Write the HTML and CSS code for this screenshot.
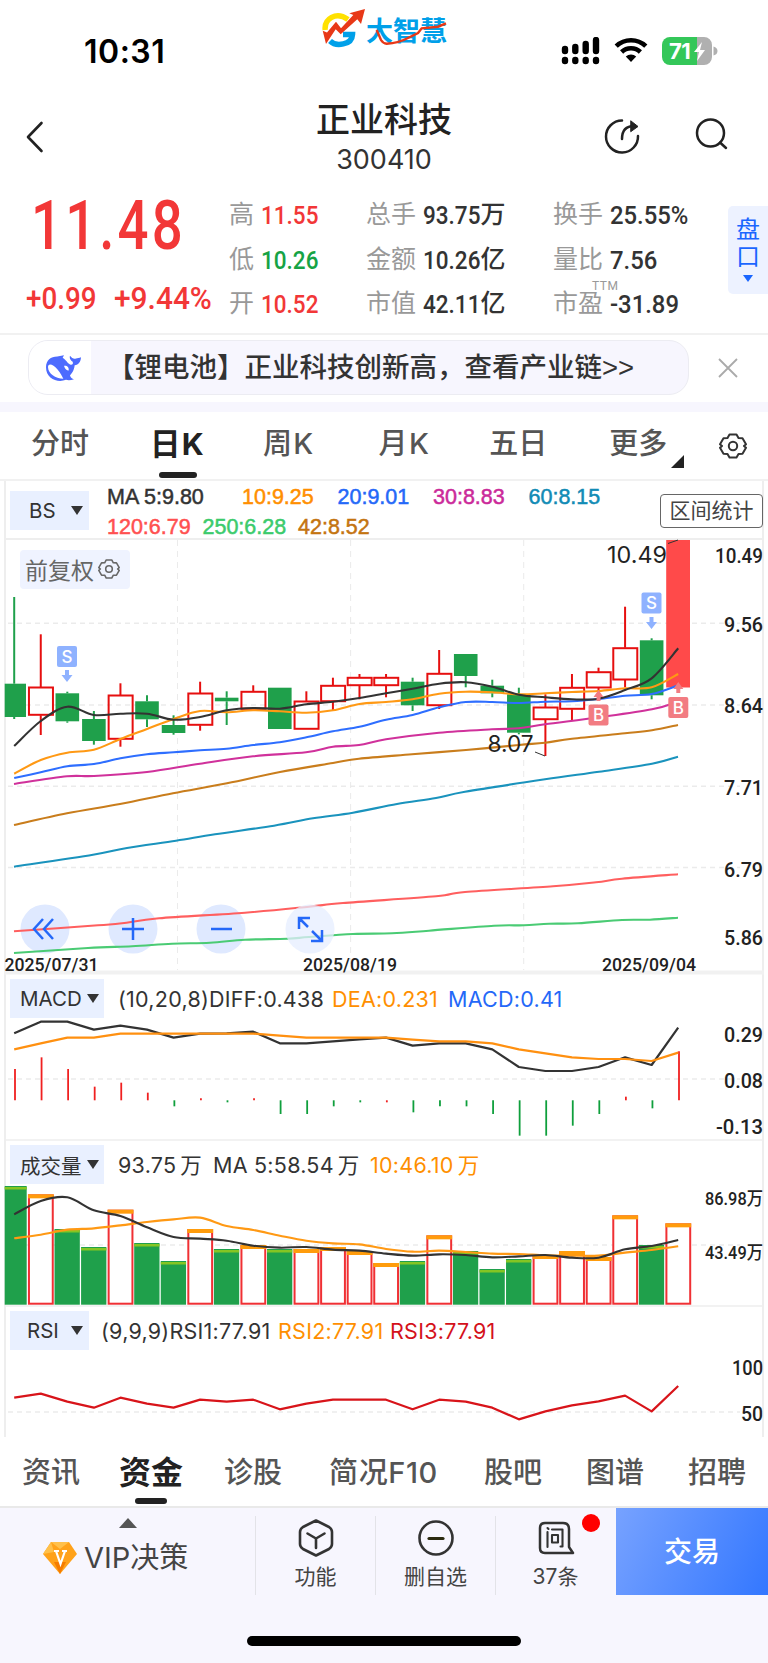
FILE: index.html
```
<!DOCTYPE html>
<html lang="zh-CN">
<head>
	<meta charset="UTF-8">
	<title>正业科技 300410</title>
	<link rel="stylesheet" href="styles.css">
</head>
<body>
	<div class="status">
		<span class="time">10:31</span>
		<div class="brand">
			<svg width="44" height="42" viewBox="0 0 44 42">
				<path d="M3.200 23C2 12 14 4 26 12.500" fill="none" stroke="#ffe100" stroke-width="5.500"/>
				<path d="M8 34C14 40 30 38 30.500 27.500H21" fill="none" stroke="#00a0e9" stroke-width="5.500"/>
				<path d="M.7 23.700L5 25.500 14 14.700l5 6.600L31.300 8l-4-1.700L43 2l-4 15-3.700-4.700-16.600 15-5-5L4 37z" fill="#e83817"/>
			</svg>
			<span>大智慧</span>
			<svg class="swoosh" width="78" height="30" viewBox="0 0 78 30"><path d="M4.700 12L9 22Q11 25.500 14.700 25.700Q26 25.500 38 19L46 15L49.700 10.300L66 8.700L74 5.300" fill="none" stroke="#e83817" stroke-width="2.400"/></svg>
		</div>
		<div class="indicators">
			<svg width="40" height="28" viewBox="0 0 40 28">
				<path d="M4 12v2M14.300 10v4M24.700 7v7M35 3v11M4 23v1M14.300 23v1M24.700 23v1M35 23v1" stroke="#000" stroke-width="6.400" stroke-linecap="round"/>
			</svg>
			<svg width="34" height="26" viewBox="0 0 34 26">
				<path d="M2.200 9.200a21.500 21.500 0 0 1 29.600 0M7.600 15a13.600 13.600 0 0 1 18.800 0" fill="none" stroke="#000" stroke-width="4.600"/>
				<path d="M17 25l-5.200-5.400a7.600 7.600 0 0 1 10.400 0z"/>
			</svg>
			<svg width="56" height="28" viewBox="0 0 56 28">
				<path d="M8 0H35V28H8a8 8 0 0 1-8-8V8a8 8 0 0 1 8-8z" fill="#34c759"/>
				<path d="M35 0h7a8 8 0 0 1 8 8v12a8 8 0 0 1-8 8h-7zM51.500 9.500q4 1 4 4.500t-4 4.500z" fill="#b0b0b0"/>
				<text x="7" y="22" class="battery-level">71</text>
				<path d="M40 5l-8 10h5l-2 9 8-11h-5z" fill="#fff"/>
			</svg>
		</div>
	</div>

	<header>
		<svg class="back" width="18" height="32" viewBox="0 0 18 32"><path d="M15.500 2L2 16l13.500 14" fill="none" stroke="#222" stroke-width="2.600" stroke-linecap="round" stroke-linejoin="round"/></svg>
		<div class="title">
			<h1>正业科技</h1>
			<p>300410</p>
		</div>
		<div class="actions">
			<svg width="38" height="38" viewBox="0 0 38 38" fill="none" stroke="#222" stroke-width="2.500" stroke-linecap="round" stroke-linejoin="round">
				<path d="M19 3.500A16 16 0 1 0 35 19"/><path d="M19 22c0-8 4-13 12-13"/><path d="M28 4l7 5.500-7 5z" fill="#222" stroke-width="1"/>
			</svg>
			<svg width="34" height="34" viewBox="0 0 34 34" fill="none" stroke="#222" stroke-width="2.500" stroke-linecap="round"><circle cx="15.500" cy="16" r="13.500"/><path d="M25 25.500l6 5.500"/></svg>
		</div>
	</header>

	<section class="quote">
		<div class="price red">
			<strong>11.48</strong>
			<div class="change"><span>+0.99</span><span>+9.44%</span></div>
		</div>
		<dl class="stats">
			<div><dt>高</dt><dd class="red"><i>11.55</i></dd></div>
			<div><dt>总手</dt><dd><i>93.75</i>万</dd></div>
			<div><dt>换手</dt><dd><i>25.55%</i></dd></div>
			<div><dt>低</dt><dd class="green"><i>10.26</i></dd></div>
			<div><dt>金额</dt><dd><i>10.26</i>亿</dd></div>
			<div><dt>量比</dt><dd><i>7.56</i></dd></div>
			<div><dt>开</dt><dd class="red"><i>10.52</i></dd></div>
			<div><dt>市值</dt><dd><i>42.11</i>亿</dd></div>
			<div><dt>市盈<sup>TTM</sup></dt><dd><i>-31.89</i></dd></div>
		</dl>
		<div class="handicap"><span>盘</span><span>口</span><svg width="10" height="7"><path d="M0 0h10L5 7z" fill="#1a66ff"/></svg></div>
	</section>

	<section class="banner">
		<div class="pill">
			<div class="whale">
				<svg width="35" height="27" viewBox="78 76 105 80">
					<path d="M78 112C78 92 92 80 112 80L132 76L128 84C140 92 142 100 150 104C158 106 160 102 158 96C150 90 148 84 150 78C156 86 162 88 168 86C172 84 178 84 183 82C182 96 176 104 164 106C162 122 156 130 150 136C152 144 156 146 162 148C152 152 144 152 138 150C112 160 78 146 78 112z" fill="#4d6bfe"/>
					<path d="M84 112C84 98 100 104 112 118C122 130 126 138 130 147C106 145 85 132 84 112zM132 108C140 106 148 112 146 122C140 124 134 116 132 108z" fill="#fff"/>
				</svg>
			</div>
			<span>【锂电池】正业科技创新高，查看产业链<em>&gt;&gt;</em></span>
		</div>
		<svg class="close" width="20" height="20" viewBox="0 0 20 20"><path d="M1 1l18 18M19 1L1 19" stroke="#aaa" stroke-width="1.800"/></svg>
	</section>

	<nav class="periods">
		<a>分时</a>
		<a class="active">日K</a>
		<a>周K</a>
		<a>月K</a>
		<a>五日</a>
		<a class="more">更多</a>
		<svg class="gear" width="28" height="28" viewBox="0 0 28 28"><use href="#gear"/></svg>
	</nav>

	<main>
		<div class="head head-main">
			<button class="chip">BS<i class="caret"></i></button>
			<div class="ma">
				<span class="dark">MA 5:9.80</span><span class="orange">10:9.25</span><span class="blue">20:9.01</span><span class="magenta">30:8.83</span><span class="teal">60:8.15</span>
				<span class="coral">120:6.79</span><span class="mint">250:6.28</span><span class="brown">42:8.52</span>
			</div>
			<button class="range">区间统计</button>
		</div>
		<div class="plot">
			<svg id="price" width="768" height="433" viewBox="0 540 768 433"></svg>
			<div class="adjust">前复权<svg width="22" height="22" viewBox="0 0 28 28"><use href="#gear"/></svg></div>
		</div>

		<div class="head head-macd">
			<button class="chip wide">MACD<i class="caret"></i></button>
			<div class="legend"><span class="w1">(10,20,8)DIFF:0.438</span><span class="w2 orange">DEA:0.231</span><span class="blue">MACD:0.41</span></div>
		</div>
		<svg id="macd" width="768" height="122" viewBox="0 1019 768 122"></svg>

		<div class="head head-vol">
			<button class="chip wide">成交量<i class="caret"></i></button>
			<div class="legend"><span class="w3">93.75<em>万</em></span><span class="w4">MA 5:58.54<em>万</em></span><span class="orange">10:46.10<em>万</em></span></div>
		</div>
		<svg id="volume" width="768" height="121" viewBox="0 1186 768 121"></svg>

		<div class="head head-rsi">
			<button class="chip">RSI<i class="caret"></i></button>
			<div class="legend"><span class="w5">(9,9,9)RSI1:77.91</span><span class="w6 orange">RSI2:77.91</span><span class="crimson">RSI3:77.91</span></div>
		</div>
		<svg id="rsi" width="768" height="85" viewBox="0 1352 768 85"></svg>
	</main>

	<nav class="sections">
		<a>资讯</a>
		<a class="active">资金</a>
		<a>诊股</a>
		<a>简况F10</a>
		<a>股吧</a>
		<a>图谱</a>
		<a>招聘</a>
	</nav>

	<footer>
		<div class="toolbar">
			<div class="vip">
				<svg class="up" width="18" height="10"><path d="M9 0l9 10H0z" fill="#555"/></svg>
				<div>
					<svg width="34" height="32" viewBox="0 0 34 32">
						<path d="M8 0h18l8 12-17 20L0 12z" fill="#ffa21a"/><path d="M8 0h18l-9 7zM0 12L8 0l3 10z" fill="#ffc04a"/><path d="M17 32l6-12h-12z" fill="#f57c00"/>
						<path d="M11 9h5M19 9h5M13 9l4.500 13L22 9" fill="none" stroke="#fff" stroke-width="2.200"/>
					</svg>
					<span>VIP决策</span>
				</div>
			</div>
			<div class="tool">
				<svg width="36" height="38" viewBox="0 0 36 38" fill="none" stroke="#333" stroke-width="2.600" stroke-linejoin="round" stroke-linecap="round"><path d="M18 1.500L31 8Q34 10 34 13V25Q34 28 31 30L18 36.500L5 30Q2 28 2 25V13Q2 10 5 8z"/><path d="M9.500 14.500l8.500 5 8.500-5M18 19.500v9.500"/></svg>
				<span>功能</span>
			</div>
			<div class="tool">
				<svg width="38" height="38" viewBox="0 0 38 38" fill="none" stroke="#333" stroke-width="2.600"><circle cx="19" cy="19" r="16.500"/><path d="M12 19.500h14" stroke="#2b2a10" stroke-width="3.200" stroke-linecap="round"/></svg>
				<span>删自选</span>
			</div>
			<div class="tool">
				<svg width="38" height="38" viewBox="0 0 38 38" fill="none" stroke="#333" stroke-width="2.500" stroke-linejoin="round" stroke-linecap="round"><path d="M8 4H26Q32 4 32 10V28L36 34H8Q3 34 3 29V9Q3 4 8 4z"/><path d="M10.500 13v15M10.500 9l1 1M15 10.500h10.500v17h-2M15 16h6v7.500h-6z" stroke-width="2.100"/></svg>
				<span>37条</span>
				<b class="dot"></b>
			</div>
			<div class="trade">交易</div>
		</div>
		<div class="home"></div>
	</footer>

	<svg class="defs">
		<symbol id="gear" viewBox="0 0 28 28"><path d="M10.500 2.500h7l2 3.600 4 .1 3.500 6-2 1.800 2 1.800-3.500 6-4 .1-2 3.600h-7l-2-3.600-4-.1-3.500-6L3 14l-2-1.800 3.500-6 4-.1z" fill="none" stroke="currentColor" stroke-width="2" stroke-linejoin="round"/><circle cx="14" cy="14" r="4.200" fill="none" stroke="currentColor" stroke-width="2"/></symbol>
	</svg>
	<script src="chart.js"></script>
</body>
</html>
```

FILE: styles.css
```
html,body {
	margin:0;
	padding:0;
	background:#fff;
}

body {
	width:768px;
	height:1663px;
	overflow:hidden;
	font-family:Inter,"Noto Sans CJK SC",sans-serif;
	color:#222;
}

h1,p,dl,dd { margin:0; }

svg { display:block; flex:none; }

i,em { font-style:normal; }

button {
	border:0;
	padding:0;
	background:none;
	font:inherit;
	color:inherit;
}

.defs {
	position:absolute;
	width:0;
	height:0;
}

.dark { color:#333; }
.red { color:#f23737; }
.green { color:#16a345; }
.orange { color:#ff8f00; }
.blue { color:#2468f8; }
.magenta { color:#cb2a9a; }
.teal { color:#118bb5; }
.coral { color:#ff5050; }
.mint { color:#3ccb6c; }
.brown { color:#c47410; }
.crimson { color:#d4111b; }

/* status bar */
.status {
	display:grid;
	grid-template-columns:322px 1fr 207px;
	height:90px;
}

.time {
	padding:32px 0 0 84px;
	font-size:32px;
	line-height:39px;
	font-weight:600;
	letter-spacing:.5px;
	color:#000;
}

.brand {
	position:relative;
	display:flex;
	padding-top:7px;
}

.brand span {
	margin-top:6px;
	font-size:27px;
	line-height:38px;
	font-weight:700;
	color:#00a0e9;
}

.swoosh {
	position:absolute;
	left:50px;
	top:18px;
}

.indicators {
	display:flex;
	align-items:flex-start;
	gap:14px;
	padding-top:37px;
}

.indicators svg:first-child { margin-right:-1px; }

.battery-level {
	font:700 22px Inter,sans-serif;
	letter-spacing:-.5px;
	fill:#fff;
}

/* title */
header {
	display:grid;
	grid-template-columns:250px 268px 1fr;
	height:100px;
}

.back { margin:31px 0 0 26px; }

.title { text-align:center; }

.title h1 {
	margin-top:5px;
	font-size:34px;
	line-height:50px;
	font-weight:500;
}

.title p {
	font-size:27px;
	line-height:30px;
	color:#333;
}

.actions {
	display:flex;
	align-items:flex-start;
	gap:54px;
	padding:27px 0 0 85px;
}

/* quote */
.quote {
	display:flex;
	height:143px;
	border-bottom:2px solid #f1f1f1;
	font-family:Roboto,"Noto Sans CJK SC",sans-serif;
}

.price {
	width:229px;
	font-weight:500;
}

.price strong {
	display:block;
	margin:6px 0 0 31px;
	font-size:69px;
	line-height:60px;
	font-weight:500;
	letter-spacing:4px;
	transform:scaleX(.79);
	transform-origin:left;
}

.change {
	display:flex;
	margin:23px 0 0 26px;
	font-size:30.500px;
	line-height:40px;
}

.change span {
	transform:scaleX(.91);
	transform-origin:left;
}

.change span:first-child { width:88px; }
.change span:last-child { transform:scaleX(.98); }

.stats {
	display:grid;
	grid-template-columns:137px 187px 150px;
	grid-auto-rows:44.500px;
	padding-top:3px;
	width:499px;
}

.stats div {
	display:flex;
	line-height:44px;
	font-size:25px;
}

.stats dt {
	position:relative;
	width:32px;
	color:#999;
}

.stats div:nth-child(3n+2) dt,
.stats div:nth-child(3n) dt { width:57px; }

.stats dd {
	display:flex;
	font-weight:500;
}

.stats dd:not(.red):not(.green) { color:#333; }

.stats i {
	display:block;
	margin-right:-10px;
	font-size:26.500px;
	transform:scaleX(.85);
	transform-origin:left;
}

.stats div:nth-child(3n) i { transform:scaleX(.9); }

.stats sup {
	position:absolute;
	left:39px;
	top:-2px;
	font-size:12px;
	line-height:12px;
	letter-spacing:.5px;
}

.handicap {
	display:flex;
	flex-direction:column;
	align-items:center;
	margin-top:16px;
	padding-top:11px;
	box-sizing:border-box;
	width:40px;
	height:88px;
	border-radius:5px 0 0 5px;
	background:#edf2ff;
	color:#1a66ff;
	font-size:24px;
	line-height:27px;
}

.handicap svg { margin-top:4px; }

/* banner */
.banner {
	display:flex;
	align-items:center;
	box-sizing:border-box;
	height:77px;
	padding-bottom:2px;
	border-bottom:10px solid #f7f6fe;
}

.pill {
	display:flex;
	box-sizing:border-box;
	width:661px;
	height:55px;
	margin-left:28px;
	border:1px solid #ececf2;
	border-radius:20px;
	background:#f7f6fe;
	overflow:hidden;
	font-size:27.500px;
	line-height:52px;
	font-weight:500;
	color:#333;
	white-space:nowrap;
}

.pill span { margin-left:16px; }
.pill em { font-family:"Liberation Sans",sans-serif; }

.whale {
	width:62px;
	padding:14px 0 0 17px;
	box-sizing:border-box;
	background:#fff;
}

.close { margin-left:29px; }

/* period tabs */
.periods {
	display:flex;
	height:67px;
	border-bottom:2px solid #f1f1f1;
	line-height:64px;
	font-size:29px;
	font-weight:500;
	color:#555;
}

.periods a { margin-left:31px; white-space:nowrap; }
.periods a:nth-child(2) { margin-left:61px; font-size:30.500px; }
.periods a:nth-child(3) { margin-left:58px; }
.periods a:nth-child(4) { margin-left:64px; }
.periods a:nth-child(5) { margin-left:59px; }
.periods a:nth-child(6) { margin-left:62px; }

.periods a:nth-child(2),
.periods a:nth-child(3),
.periods a:nth-child(4) { letter-spacing:1.300px; }

.periods .active,
.sections .active {
	position:relative;
	font-weight:700;
	color:#222;
}

.periods .active::after,
.sections .active::after {
	content:"";
	position:absolute;
	left:50%;
	bottom:1px;
	width:38px;
	height:6px;
	margin-left:-19px;
	border-radius:3px;
	background:#222;
}

.more { position:relative; }

.more::after {
	content:"";
	position:absolute;
	right:-17px;
	top:43px;
	border:solid transparent;
	border-width:0 0 13px 13px;
	border-bottom-color:#222;
}

.gear { margin:20px 0 0 auto; padding-right:21px; color:#333; }

/* charts */
main {
	background:
		linear-gradient(#eee,#eee) 4px 0/2px 100% no-repeat,
		linear-gradient(#eee,#eee) 762px 0/2px 100% no-repeat;
}

.head {
	display:flex;
	align-items:flex-start;
	box-sizing:border-box;
	padding-left:10px;
}

.head-main {
	height:59px;
	padding-top:10px;
	background:linear-gradient(#eee,#eee) 4px 57px/760px 2px no-repeat;
}

.head-macd { height:46px; padding-top:6px; }
.head-vol { height:45px; padding-top:4px; }
.head-rsi { height:45px; padding-top:4px; }

.chip {
	display:flex;
	align-items:center;
	justify-content:space-between;
	box-sizing:border-box;
	width:79px;
	height:39px;
	padding:0 6px 0 19px;
	background:#e9f0ff;
	font-size:20.500px;
	color:#333;
}

.head-rsi .chip { padding-left:17px; }
.chip.wide { width:94px; padding:0 5px 0 10px; }

.caret {
	border:solid transparent;
	border-width:9px 6px 0;
	border-top-color:#333;
}

.ma {
	display:flex;
	flex-wrap:wrap;
	width:553px;
	margin:-8px 0 0 18px;
	font-family:"Liberation Sans",sans-serif;
	font-size:21.500px;
	line-height:29.500px;
	-webkit-text-stroke:.5px;
}

.ma span { width:95.500px; white-space:nowrap; }
.ma span:first-child { width:135px; }
.ma span:nth-child(5) { width:120px; }

.range {
	width:103px;
	height:34px;
	margin-top:3px;
	border:1.500px solid #666;
	border-radius:4px;
	font-size:21px;
	line-height:30px;
	color:#444;
}

.plot { position:relative; }

.adjust {
	position:absolute;
	left:20px;
	top:10px;
	display:flex;
	align-items:center;
	gap:4px;
	box-sizing:border-box;
	width:110px;
	height:39px;
	padding:0 0 2px 5px;
	border-radius:4px;
	background:#eff3ff;
	font-size:23px;
	color:#666;
}

.legend {
	display:flex;
	padding-left:14px;
	font-size:21.500px;
	line-height:41px;
	letter-spacing:.25px;
	color:#333;
	white-space:nowrap;
}

.head-rsi .legend { padding-left:12px; }

.legend em { margin-left:4px; }

.w1 { width:214px; }
.w2 { width:116px; }
.w3 { width:95px; }
.w4 { width:157px; }
.w5 { width:177px; }
.w6 { width:112px; }

main svg { overflow:visible; }

main svg text {
	font-family:Roboto,"Noto Sans CJK SC",sans-serif;
	font-weight:500;
	font-size:20px;
	fill:#222;
}

main svg text.mark { font:400 22.500px Inter,sans-serif; }
main svg text.tag { font:500 17px Inter,sans-serif; fill:#fff; }

/* section tabs */
.sections {
	display:flex;
	height:69px;
	border-bottom:2px solid #e9e9e9;
	line-height:72px;
	font-size:29px;
	font-weight:500;
	color:#555;
	white-space:nowrap;
}

.sections a { margin-left:44px; }
.sections a:first-child { margin-left:22px; }
.sections a:nth-child(2) { margin-left:39px; font-size:32px; }
.sections a:nth-child(3) { margin-left:41px; }
.sections a:nth-child(4) { margin-left:47px; letter-spacing:.6px; }
.sections a:nth-child(5) { margin-left:46px; }

.sections .active::after {
	bottom:2px;
	width:32px;
	margin-left:-16px;
}

/* toolbar */
footer {
	height:155px;
	background:#f7f6fe;
}

.toolbar {
	display:flex;
	height:87px;
}

.vip {
	width:255px;
	font-size:29px;
	color:#444;
}

.vip div {
	display:flex;
	align-items:center;
	gap:7px;
	margin:12px 0 0 43px;
	line-height:36px;
}

.up { margin:10px 0 0 119px; }

.tool {
	position:relative;
	display:flex;
	flex-direction:column;
	align-items:center;
	width:120px;
	margin-top:8px;
	box-sizing:border-box;
	border-left:1px solid #e3e3e8;
	padding-top:3px;
	font-size:21px;
	line-height:40px;
	color:#444;
}

.tool svg { height:38px; }

.dot {
	position:absolute;
	right:15px;
	top:-2px;
	width:18px;
	height:18px;
	border-radius:9px;
	background:#f00;
}

.trade {
	width:152px;
	margin-left:auto;
	background:linear-gradient(115deg,#77a2ff,#3377ff);
	color:#fff;
	font-size:28px;
	line-height:89px;
	font-weight:500;
	text-align:center;
}

.home {
	width:274px;
	height:10px;
	margin:41px auto 0;
	border-radius:5px;
	background:#000;
}
```

FILE: chart.js
```
var X0 = 14.2, STEP = 26.56;
var RED = '#e60f0f', GREEN = '#1fa04b';

function x(i) { return X0 + i * STEP; }

function el(parent, name, attrs, text) {
	var node = document.createElementNS('http://www.w3.org/2000/svg', name);
	for (var key in attrs) node.setAttribute(key, attrs[key]);
	if (text) node.textContent = text;
	parent.appendChild(node);
	return node;
}

function rect(svg, l, t, w, h, fill, stroke) {
	el(svg, 'rect', {x: l, y: t, width: w, height: h, fill: fill, stroke: stroke || 'none', 'stroke-width': 2});
}

function line(svg, x1, y1, x2, y2, color, width, dash) {
	el(svg, 'line', {x1: x1, y1: y1, x2: x2, y2: y2, stroke: color, 'stroke-width': width || 1, 'stroke-dasharray': dash || 'none'});
}

// straight polyline or catmull-rom curve through the points
function path(svg, pts, color, smooth, width) {
	var d = 'M' + pts[0].join(' ');
	for (var i = 1; i < pts.length; i++) {
		var a = pts[i - 1], b = pts[i], prev = pts[i - 2] || a, next = pts[i + 1] || b;
		d += smooth
			? 'C' + [a[0] + (b[0] - prev[0]) / 6, a[1] + (b[1] - prev[1]) / 6, b[0] - (next[0] - a[0]) / 6, b[1] - (next[1] - a[1]) / 6, b[0], b[1]].join(' ')
			: 'L' + b.join(' ');
	}
	el(svg, 'path', {d: d, fill: 'none', stroke: color, 'stroke-width': width || 2.2, 'stroke-linejoin': 'round'});
}

function series(ys, base) {
	return ys.map(function (y, i) { return [x(i), base === undefined ? y : base + y / 3]; });
}

function grid(svg, ys) {
	ys.forEach(function (y) { line(svg, 8, y, 740, y, '#ebebeb', 1.5, '5 4'); });
}

// axis label squeezed to end at the right edge
function axis(svg, str, left, y, size) {
	el(svg, 'text', {x: left, y: y, textLength: 763 - left, lengthAdjust: 'spacingAndGlyphs', style: 'font-size:' + (size || 20) + 'px'}, str);
}

/* price */
var price = document.getElementById('price');
grid(price, [623.3, 705, 786.3, 867.5]);
[177.5, 350.6, 523.7].forEach(function (v) { line(price, v, 540, v, 970, '#ebebeb', 1, '6 5'); });
line(price, 4, 972.5, 764, 972.5, '#f1f1f1', 4);
[45, 133, 221].forEach(function (cx) { el(price, 'circle', {cx: cx, cy: 929, r: 24.5, fill: '#dfe9ff'}); });

// up, body top, body bottom, high, low
var candles = [
	[0, 683.7, 717, 597, 719], [1, 687, 715.3, 634.3, 735], [0, 693.3, 721.3, 691.7, 722.7], [0, 719, 741, 711, 744.7],
	[1, 695, 739.3, 683.3, 746.7], [0, 701.3, 719.3, 695.3, 727], [0, 725, 733, 715.3, 734.7], [1, 693, 725.3, 681.7, 730.7],
	[0, 697.7, 701.3, 691.3, 725], [1, 691.3, 709.3, 685.3, 709.3], [0, 687.7, 729, 687.7, 729], [1, 701, 729.3, 691.3, 729.3],
	[1, 685.3, 701.7, 677.7, 711], [1, 677.3, 685.7, 674, 699.3], [1, 677.3, 685.7, 674, 697.3], [0, 681.7, 705.3, 677.7, 711],
	[1, 673.3, 705.7, 650, 709], [0, 654, 676, 654, 687.3], [0, 685.7, 693.3, 679.7, 697.3], [0, 694.3, 732.7, 687.7, 734.3],
	[1, 707, 719.7, 694.3, 756], [1, 687.3, 709.3, 674, 720.7], [1, 671.7, 688, 667.7, 695], [1, 647.7, 680, 606.7, 687.3],
	[0, 640.3, 695.3, 638.3, 699.3]
];
candles.forEach(function (c, i) {
	var color = c[0] ? RED : GREEN, left = Math.max(x(i) - 11.8, 4.7);
	line(price, x(i), c[3], x(i), c[1], color, 2);
	line(price, x(i), c[2], x(i), c[4], color, 2);
	if (c[0]) rect(price, left, c[1] + .5, 24, c[2] - c[1] - 1, 'none', RED);
	else rect(price, left, c[1], x(i) + 11.8 - left, c[2] - c[1], GREEN);
});
rect(price, 666.2, 540, 23.8, 147.5, '#ff4a4a');

var W = 2.1;
path(price, [[14, 953], [88, 948], [132, 946.3], [172, 943.7], [210, 942.7], [245, 939.7], [287, 938.7], [309, 937], [353, 934], [392, 933.3], [429, 930.7], [494, 925.7], [524, 925.3], [549, 923.7], [578, 923.3], [622, 920], [650, 919.7], [678, 917.7]], '#4acb74', true, W);
path(price, [[14, 931.3], [98, 925.3], [122, 923.3], [159, 918.3], [245, 912.7], [309, 906.7], [343, 903], [436, 896.3], [465, 892], [553, 886.3], [596, 882.3], [622, 878.7], [678, 874.3]], '#ff5f5f', true, W);
path(price, [[14, 866.7], [93, 854.7], [127, 848], [176, 840.7], [215, 834.3], [274, 825.7], [313, 818.3], [353, 812.7], [397, 804], [436, 798], [465, 791.7], [545, 779.3], [599, 771.7], [652, 763.7], [678, 756.7]], '#1a93bd', true, W);
path(price, [[14, 825], [67, 813.3], [120, 804], [173, 793.3], [227, 783.3], [280, 772], [333, 763], [359, 758.7], [412, 754.3], [466, 750], [519, 745], [545, 742.7], [572, 738.7], [625, 733.3], [652, 730.3], [678, 725]], '#c97d1c', true, W);
path(price, [[14, 784], [67, 776.3], [94, 776], [147, 772], [200, 763.7], [253, 756.3], [306, 752.3], [333, 746.7], [359, 745], [386, 739.3], [439, 732.7], [492, 729.3], [519, 728.3], [545, 724.3], [599, 717.3], [652, 709.3], [678, 701.7]], '#d0319b', true, W);
path(price, series([778, 772.3, 766.3, 764, 758.3, 754.3, 752.3, 750.3, 748.7, 745, 742.3, 737.3, 731.3, 726.7, 719.7, 715, 707.3, 702, 702, 703, 701.7, 701.3, 699, 695.7, 694, 685.3]), '#2e6eff', true, W);
path(price, series([773.7, 760, 752.7, 749.7, 739, 729, 719, 711, 712.3, 710.3, 711.3, 712.7, 710.3, 704, 702, 699.3, 693.7, 691.7, 692.3, 694.3, 693.3, 692, 691, 688.3, 687.3, 674]), '#ff9914', true, W);
path(price, series([746, 721, 706.7, 715, 713.7, 713.7, 719.7, 717, 710.3, 708, 708.7, 704.3, 701.7, 698, 693.3, 688.7, 683.7, 682.3, 686.7, 694.7, 697.3, 699.3, 698.7, 690, 678.3, 648.3]), '#333', true, W);

// trade markers
function marker(cx, top, letter, color, arrow) {
	el(price, 'rect', {x: cx - 10, y: top, width: 20, height: 21, rx: 2, fill: color});
	el(price, 'text', {x: cx, y: top + 16.5, 'text-anchor': 'middle', 'class': 'tag'}, letter);
	el(price, 'path', {d: arrow, fill: color});
}
marker(67, 646, 'S', '#8fb2ff', 'M65 670h4v5h3.500l-5.500 7-5.500-7h3.500z');
marker(651.5, 592.5, 'S', '#8fb2ff', 'M649.500 617h4v5h3.500l-5.500 7-5.500-7h3.500z');
marker(598.5, 704.5, 'B', '#f27c82', 'M598.500 690l5 7h-3v4h-4v-4h-3z');
marker(678.3, 697, 'B', '#f27c82', 'M678.300 682l5 7h-3v4h-4v-4h-3z');

el(price, 'text', {x: 607, y: 563, textLength: 60, lengthAdjust: 'spacingAndGlyphs', 'class': 'mark'}, '10.49');
el(price, 'text', {x: 487.5, y: 752, textLength: 46, lengthAdjust: 'spacingAndGlyphs', 'class': 'mark'}, '8.07');
line(price, 668, 543.5, 678, 540, '#333', 1);
line(price, 535, 752, 545, 756, '#333', 1);

axis(price, '10.49', 715, 563);
axis(price, '9.56', 724, 632.3);
axis(price, '8.64', 724, 713);
axis(price, '7.71', 724, 795);
axis(price, '6.79', 724, 876.7);
axis(price, '5.86', 724, 945);
[[4.5, '2025/07/31'], [303, '2025/08/19'], [602, '2025/09/04']].forEach(function (d) {
	el(price, 'text', {x: d[0], y: 970.5, textLength: 94, lengthAdjust: 'spacingAndGlyphs', style: 'font-size:18px'}, d[1]);
});

// zoom controls
el(price, 'circle', {cx: 310, cy: 929, r: 24.5, fill: '#e5edff', 'fill-opacity': .75});
el(price, 'path', {
	d: 'M43 919l-9 10 9 10M53 919l-9 10 9 10M133 918v22M122 929h22M211 929h21M310 918h-11v11M299 918l9 9M312 931l10 10M322 930v11h-11',
	fill: 'none', stroke: '#2468f8', 'stroke-width': 2.5
});

/* macd */
var macd = document.getElementById('macd');
grid(macd, [1079]);
line(macd, 4, 1140, 764, 1140, '#eee', 1.5);
[297, 262, 297, 350, 338, 368, -409, 385, -397, 385, -432, -432, -409, -397, 397, -427, -409, -409, -432, -497, -497, -467, -432, 380, -415, 244].forEach(function (v, i) {
	line(macd, x(i) + .8, 1100.3, x(i) + .8, 970 + Math.abs(v) / 3, v > 0 ? '#f02020' : '#0f9f3c', 1.8);
});
path(macd, series([190, 155, 155, 179, 167, 179, 203, 191, 190, 185, 220, 220, 214, 208, 203, 227, 220, 220, 238, 291, 303, 303, 291, 262, 285, 173], 970), '#333');
path(macd, series([238, 220, 203, 203, 191, 191, 191, 191, 191, 191, 197, 203, 203, 203, 203, 209, 214, 214, 220, 238, 250, 262, 267, 267, 273, 248], 970), '#ff9010');
axis(macd, '0.29', 724, 1041.5);
axis(macd, '0.08', 724, 1087.5);
axis(macd, '-0.13', 716, 1133.5);

/* volume, negative = down day */
var volume = document.getElementById('volume');
grid(volume, [1245]);
line(volume, 4, 1306, 764, 1306, '#eee', 1.5);
[-138, 163, -267, -321, 209, -309, -363, 267, -327, 315, -327, 327, 321, 333, 369, -363, 286, -333, -387, -357, 345, 333, 351, 226, -315, 250].forEach(function (v, i) {
	var top = 1140 + Math.abs(v) / 3, left = Math.max(x(i) - 12.8, 4.7), w = x(i) + 12.5 - left;
	if (v > 0) {
		rect(volume, left + 1, top + 1, w - 1.5, 1303.7 - top - 1, '#fff', '#f03034');
		rect(volume, left, top, w + .5, 4, '#ff9c0c');
	} else {
		rect(volume, left, top, w, 1304.7 - top, GREEN);
		rect(volume, left, top + 1, w, 2.5, '#85c523');
	}
});
path(volume, series([295, 284, 269, 265, 256, 246, 238, 233, 258, 270, 287, 302, 310, 313, 327, 335, 332, 336, 341, 342, 346, 347, 347, 338, 330, 319], 1140), '#ff9914', true, W);
path(volume, series([223, 183, 172, 211, 228, 262, 291, 296, 302, 317, 323, 321, 329, 332, 341, 347, 343, 345, 352, 349, 345, 353, 353, 328, 318, 300], 1140), '#333', true, W);
axis(volume, '86.98万', 705, 1204.5, 18);
axis(volume, '43.49万', 705, 1258.5, 18);

/* rsi */
var rsi = document.getElementById('rsi');
grid(rsi, [1412]);
path(rsi, series([293, 281, 305, 323, 293, 311, 323, 299, 305, 299, 328, 311, 299, 299, 299, 328, 299, 305, 323, 358, 334, 316, 304, 287, 334, 258], 1300), '#d8141a');
axis(rsi, '100', 732, 1375);
axis(rsi, '50', 741, 1420.5);
```
